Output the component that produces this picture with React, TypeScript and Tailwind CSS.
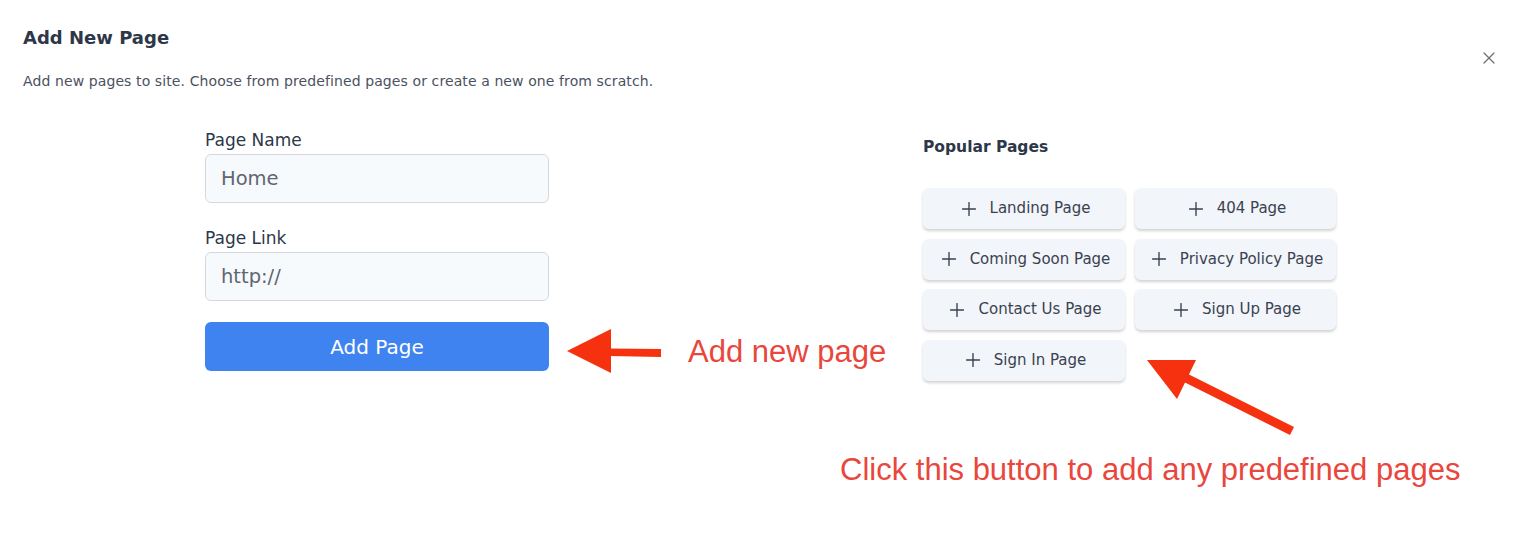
import { Plus, X } from "lucide-react";

const POPULAR = [
  "Landing Page",
  "404 Page",
  "Coming Soon Page",
  "Privacy Policy Page",
  "Contact Us Page",
  "Sign Up Page",
  "Sign In Page",
];

function PageButton({ label }: { label: string }) {
  return (
    <button
      type="button"
      className="flex h-[41px] items-center justify-center gap-[10px] rounded-[6px] bg-[#f2f5fa] text-[15px] text-[#3a4250] shadow-[0_2px_3px_rgba(0,0,0,0.18)]"
    >
      <Plus className="h-[22px] w-[22px]" strokeWidth={1.5} />
      <span>{label}</span>
    </button>
  );
}

export default function App() {
  return (
    <div className="relative h-[550px] w-full overflow-hidden bg-white font-['DejaVu_Sans',sans-serif] text-[#2d3748]">
      <div className="flex justify-between pl-[23px] pr-[28px] pt-[26px]">
        <div>
          <h2 className="text-[18px] font-bold leading-[24px] text-[#2d3748]">
            Add New Page
          </h2>
          <p className="mt-[21px] text-[14px] leading-[20px] tracking-[0.1px] text-[#4a5260]">
            Add new pages to site. Choose from predefined pages or create a new
            one from scratch.
          </p>
        </div>
        <button type="button" className="mt-[22px] h-[20px] text-[#6b6f76]">
          <X className="h-[20px] w-[20px]" strokeWidth={1.5} />
        </button>
      </div>

      <div className="mt-[37px] flex items-start">
        <form className="ml-[205px] w-[344px]">
          <label className="block text-[17px] leading-[24px] text-[#2d3748]">
            Page Name
          </label>
          <input
            className="mt-[2px] h-[49px] w-full rounded-[6px] border border-[#d5d9de] bg-[#f7fafc] px-[15px] text-[19.5px] text-[#5f6672] outline-none placeholder:text-[#5f6672]"
            placeholder="Home"
          />
          <label className="mt-[23px] block text-[17px] leading-[24px] text-[#2d3748]">
            Page Link
          </label>
          <input
            className="mt-[2px] h-[49px] w-full rounded-[6px] border border-[#d5d9de] bg-[#f7fafc] px-[15px] text-[19.5px] text-[#5f6672] outline-none placeholder:text-[#5f6672]"
            placeholder="http://"
          />
          <button
            type="button"
            className="mt-[21px] h-[49px] w-full rounded-[6px] bg-[#3f83f1] text-[20px] text-white"
          >
            Add Page
          </button>
        </form>

        <div className="ml-[374px] mt-[9px]">
          <h3 className="text-[15.5px] font-bold leading-[20px] text-[#2d3748]">
            Popular Pages
          </h3>
          <div className="mt-[31px] grid grid-cols-[202px_201px] gap-x-[10px] gap-y-[9.5px]">
            {POPULAR.map((p) => (
              <PageButton key={p} label={p} />
            ))}
          </div>
        </div>
      </div>

      {/* annotation layer */}
      <svg
        className="pointer-events-none absolute left-0 top-0"
        width="1527"
        height="550"
      >
        <polygon points="567,351 611,329 611,373" fill="#f5310f" />
        <polygon points="608,348.5 661,349 661,357 608,356" fill="#f5310f" />
        <polygon points="1147,360 1196,360 1177,399" fill="#f5310f" />
        <line
          x1="1180"
          y1="375"
          x2="1292"
          y2="431"
          stroke="#f5310f"
          strokeWidth="9"
        />
      </svg>
      <span className="absolute left-[688px] top-[333px] font-['Liberation_Sans',sans-serif] text-[31px] leading-[38px] text-[#e9463d]">
        Add new page
      </span>
      <span className="absolute left-[840px] top-[451px] font-['Liberation_Sans',sans-serif] text-[31px] leading-[38px] text-[#e9463d]">
        Click this button to add any predefined pages
      </span>
    </div>
  );
}
